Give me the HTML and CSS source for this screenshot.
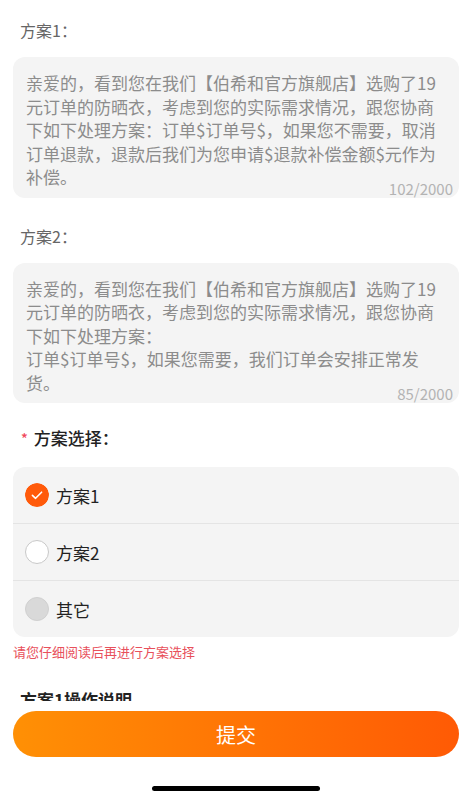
FILE: index.html
```html
<!DOCTYPE html>
<html lang="zh-CN">
<head>
	<meta charset="UTF-8">
	<meta name="viewport" content="width=device-width, initial-scale=1.0">
	<title>方案选择</title>
	<link rel="stylesheet" href="styles.css">
</head>
<body>
	<div class="page">
		<div class="field-label">方案1：</div>
		<div class="text-box">
			<p class="text-box-body">亲爱的，看到您在我们【伯希和官方旗舰店】选购了19元订单的防晒衣，考虑到您的实际需求情况，跟您协商下如下处理方案：订单$订单号$，如果您不需要，取消订单退款，退款后我们为您申请$退款补偿金额$元作为补偿。</p>
			<span class="counter">102/2000</span>
		</div>

		<div class="field-label second">方案2：</div>
		<div class="text-box">
			<p class="text-box-body">亲爱的，看到您在我们【伯希和官方旗舰店】选购了19元订单的防晒衣，考虑到您的实际需求情况，跟您协商下如下处理方案：<br>订单$订单号$，如果您需要，我们订单会安排正常发货。</p>
			<span class="counter">85/2000</span>
		</div>

		<div class="choice-title"><span class="required">*</span>方案选择：</div>
		<div class="options">
			<div class="option">
				<svg class="radio" viewBox="0 0 24 24" width="24" height="24">
					<circle cx="12" cy="12" r="12" fill="#ff5a0a"/>
					<path d="M7.4 12.3 L10.6 15.3 L16.6 9.2" fill="none" stroke="#fff" stroke-width="1.6" stroke-linecap="round" stroke-linejoin="round"/>
				</svg>
				<span>方案1</span>
			</div>
			<div class="option">
				<span class="radio empty"></span>
				<span>方案2</span>
			</div>
			<div class="option">
				<span class="radio disabled"></span>
				<span>其它</span>
			</div>
		</div>
		<div class="error-tip">请您仔细阅读后再进行方案选择</div>

		<div class="section-title">方案1操作说明</div>
	</div>

	<div class="footer">
		<button class="submit">提交</button>
		<div class="home-bar"></div>
	</div>
</body>
</html>
```

FILE: styles.css
```css
* {
	box-sizing: border-box;
}
body {
	font-family: "Noto Sans CJK SC", "Noto Sans", sans-serif;
	background-color: white;
	display: flex;
	flex-direction: column;
	height: 100vh;
	margin: 0;
	overflow: hidden;
}

.page {
	flex: 1;
	overflow: hidden;
	padding: 0 13px;
}

.field-label {
	margin-top: 19px;
	padding-left: 7px;
	font-size: 16px;
	line-height: 22px;
	color: #666;
}
.field-label.second {
	margin-top: 27px;
}

.text-box {
	position: relative;
	margin-top: 16px;
	padding: 14px 13px 9px;
	background-color: #f4f4f4;
	border-radius: 12px;
}
.text-box-body {
	margin: 0;
	font-size: 17px;
	line-height: 23.5px;
	color: #8c8c8c;
}
/* counter sits in the bottom right corner of the box, like a textarea limit */
.counter {
	position: absolute;
	right: 6px;
	bottom: 1px;
	font-size: 15px;
	line-height: 17px;
	color: #b3b3b3;
}

.choice-title {
	display: flex;
	align-items: center;
	margin-top: 24px;
	padding-left: 8px;
	font-size: 17px;
	line-height: 22px;
	font-weight: 500;
	color: #222;
}
.required {
	color: #f0485a;
	font-size: 14px;
	margin-right: 6px;
}

.options {
	margin-top: 18px;
	background-color: #f4f4f4;
	border-radius: 12px;
}
.option {
	display: flex;
	align-items: center;
	gap: 7px;
	height: 57px;
	padding-left: 12px;
	font-size: 17px;
	color: #222;
	border-bottom: 1px solid #e4e4e4;
}
.option:last-child {
	border-bottom: none;
	height: 56px;
}
.radio {
	flex: 0 0 24px;
	width: 24px;
	height: 24px;
	border-radius: 50%;
}
.radio.empty {
	background-color: white;
	border: 1px solid #c8c8c8;
}
.radio.disabled {
	background-color: #d9d9d9;
	border: 1px solid #d0d0d0;
}

.error-tip {
	margin-top: 6px;
	font-size: 13px;
	line-height: 18px;
	color: #e8505b;
}

.section-title {
	margin-top: 28px;
	padding-left: 7px;
	font-size: 17px;
	line-height: 22px;
	font-weight: bold;
	color: #222;
}

.footer {
	flex: 0 0 99px;
	background-color: white;
	padding: 10px 13px 0;
	display: flex;
	flex-direction: column;
	align-items: center;
}
.submit {
	width: 100%;
	height: 46px;
	border: none;
	border-radius: 23px;
	background: linear-gradient(90deg, #ff9005, #ff5a05);
	color: white;
	font-family: inherit;
	font-size: 20px;
}
.home-bar {
	width: 168px;
	height: 5px;
	margin-top: 29px;
	border-radius: 3px;
	background-color: black;
}
```
